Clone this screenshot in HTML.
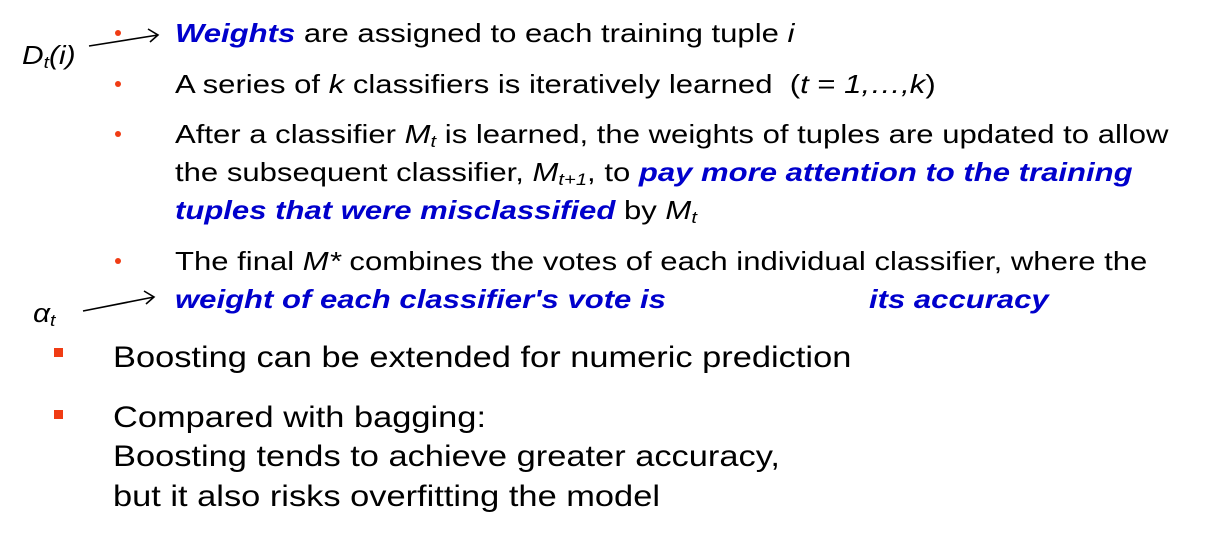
<html><head><style>
body{margin:0;width:1207px;height:546px;background:#fff;position:relative;font-family:"Liberation Sans",Arial,sans-serif;color:#000;overflow:hidden}
.t{position:absolute;line-height:1;white-space:nowrap;transform-origin:0 0}
.s{font-size:26px;left:175px;transform:scaleX(1.195)}
.m{font-size:30px;left:113px;transform:scaleX(1.147)}
.b{color:#0000cc;font-weight:bold;font-style:italic}
.d{position:absolute;width:6px;height:6px;border-radius:50%;background:#f03c14;left:115px}
.q{position:absolute;width:9px;height:9px;background:#f03c14;left:54px}
sub{font-size:0.65em;vertical-align:-0.25em}
</style></head><body>
<div class="t" style="font-size:26px;left:22px;top:42px;font-style:italic;transform:scaleX(1.15)">D<sub>t</sub>(i)</div>
<div class="t" style="font-size:26px;left:33px;top:300px;font-style:italic;transform:scaleX(1.15)">α<sub>t</sub></div>
<svg style="position:absolute;left:0;top:0" width="200" height="320"><g stroke="#000" stroke-width="1.6" fill="none">
<path d="M89 46 L158 35 M148 29 L158 35 L150 42"/>
<path d="M83 311 L154 297 M144 291 L154 297 L146 304"/></g></svg>
<div class="d" style="top:30px"></div>
<div class="d" style="top:81px"></div>
<div class="d" style="top:131px"></div>
<div class="d" style="top:258px"></div>
<div class="q" style="top:348px"></div>
<div class="q" style="top:410px"></div>
<div class="t s" style="top:20px"><span class="b">Weights</span> are assigned to each training tuple <i>i</i></div>
<div class="t s" style="top:71px">A series of <i>k</i> classifiers is iteratively learned &nbsp;(<i>t</i> = <i>1,…,k</i>)</div>
<div class="t s" style="top:121px">After a classifier <i>M<sub>t</sub></i> is learned, the weights of tuples are updated to allow</div>
<div class="t s" style="top:159px">the subsequent classifier, <i>M<sub>t+1</sub></i>, to <span class="b">pay more attention to the training</span></div>
<div class="t s" style="top:197px"><span class="b">tuples that were misclassified</span> by <i>M<sub>t</sub></i></div>
<div class="t s" style="top:248px">The final <i>M*</i> combines the votes of each individual classifier, where the</div>
<div class="t s" style="top:286px"><span class="b">weight of each classifier's vote is</span></div>
<div class="t s" style="top:286px;left:869px"><span class="b">its accuracy</span></div>
<div class="t m" style="top:343px">Boosting can be extended for numeric prediction</div>
<div class="t m" style="top:403px">Compared with bagging:</div>
<div class="t m" style="top:442px">Boosting tends to achieve greater accuracy,</div>
<div class="t m" style="top:482px">but it also risks overfitting the model</div>
</body></html>
